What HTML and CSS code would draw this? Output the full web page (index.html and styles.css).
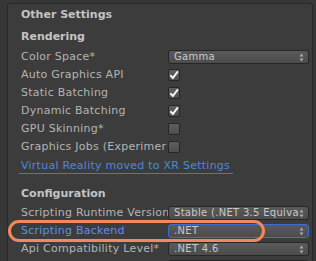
FILE: index.html
```html
<!DOCTYPE html>
<html lang="en">
<head>
    <meta charset="UTF-8">
    <title>Player Settings</title>
    <link rel="stylesheet" href="styles.css">
</head>
<body>
    <!-- inspector panel -->
    <div class="inspector">
        <div class="panel">
            <div class="section-title">Other Settings</div>

            <div class="group-title">Rendering</div>
            <div class="row">
                <span class="label">Color Space*</span>
                <div class="popup"><span class="popup-text">Gamma</span><svg class="arrows" viewBox="0 0 5 9"><path d="M2.5 0.5 L4.5 3.5 L0.5 3.5 Z M2.5 8.5 L4.5 5.5 L0.5 5.5 Z"/></svg></div>
            </div>
            <div class="row">
                <span class="label">Auto Graphics API</span>
                <span class="toggle on"><svg viewBox="0 0 12 12"><path d="M2.3 6.2 L4.9 8.9 L9.9 2.4"/></svg></span>
            </div>
            <div class="row">
                <span class="label">Static Batching</span>
                <span class="toggle on"><svg viewBox="0 0 12 12"><path d="M2.3 6.2 L4.9 8.9 L9.9 2.4"/></svg></span>
            </div>
            <div class="row">
                <span class="label">Dynamic Batching</span>
                <span class="toggle on"><svg viewBox="0 0 12 12"><path d="M2.3 6.2 L4.9 8.9 L9.9 2.4"/></svg></span>
            </div>
            <div class="row">
                <span class="label">GPU Skinning*</span>
                <span class="toggle"></span>
            </div>
            <div class="row">
                <span class="label">Graphics Jobs (Experimer</span>
                <span class="toggle"></span>
            </div>
            <div class="row">
                <span class="link">Virtual Reality moved to XR Settings</span>
            </div>

            <div class="group-title config">Configuration</div>
            <div class="row first">
                <span class="label">Scripting Runtime Version</span>
                <div class="popup"><span class="popup-text">Stable (.NET 3.5 Equivale</span><svg class="arrows" viewBox="0 0 5 9"><path d="M2.5 0.5 L4.5 3.5 L0.5 3.5 Z M2.5 8.5 L4.5 5.5 L0.5 5.5 Z"/></svg></div>
            </div>
            <div class="row">
                <span class="label focused">Scripting Backend</span>
                <div class="popup focused"><span class="popup-text">.NET</span><svg class="arrows" viewBox="0 0 5 9"><path d="M2.5 0.5 L4.5 3.5 L0.5 3.5 Z M2.5 8.5 L4.5 5.5 L0.5 5.5 Z"/></svg></div>
            </div>
            <div class="row">
                <span class="label">Api Compatibility Level*</span>
                <div class="popup"><span class="popup-text">.NET 4.6</span><svg class="arrows" viewBox="0 0 5 9"><path d="M2.5 0.5 L4.5 3.5 L0.5 3.5 Z M2.5 8.5 L4.5 5.5 L0.5 5.5 Z"/></svg></div>
            </div>
            <div class="row">
                <span class="label"></span>
                <div class="popup"></div>
            </div>
        </div>
        <div class="scroll"></div>
    </div>

    <!-- annotation drawn over the screenshot -->
    <div class="highlight"></div>
</body>
</html>
```

FILE: styles.css
```css
body{
    margin: 0;
    width: 316px;
    height: 261px;
    overflow: hidden;
    background-color: #373737;
    font-family: "DejaVu Sans", "Liberation Sans", sans-serif;
    font-size: 11px;
    position: relative;
}

.inspector{
    display: flex;
    height: 100%;
    padding: 3px 0 0 7px;
    box-sizing: border-box;
    overflow: hidden;
}

.panel{
    flex: 1;
    min-width: 0;
    background-color: #3c3c3c;
    border: 1px solid #292929;
    border-bottom: none;
    border-radius: 3px 3px 0 0;
    padding: 2px 2px 0 13px;
    overflow: hidden;
}

.scroll{
    width: 3px;
    background-color: #353535;
}

.section-title,
.group-title{
    height: 18px;
    line-height: 18px;
    font-weight: bold;
    color: #c4c4c4;
}

.group-title{
    margin-top: 4px;
    margin-bottom: 2px;
}

.group-title.config{
    margin-top: 11px;
    margin-bottom: 0;
}

.row{
    display: flex;
    align-items: center;
    height: 18px;
}

.row.first{
    margin-top: 1px;
}

.label{
    width: 147px;
    flex-shrink: 0;
    line-height: 18px;
    color: #b4b4b4;
    letter-spacing: 0.25px;
    white-space: nowrap;
    overflow: hidden;
}

.label.focused{
    color: #5d91e6;
}

.link{
    color: #4d88de;
    letter-spacing: 0.25px;
    line-height: 15px;
    white-space: nowrap;
    margin-left: -2px;
    padding: 0 3px 0 2px;
    border-bottom: 1px solid #3f78d4;
    margin-top: 1px;
}

/* checkbox */
.toggle{
    width: 12px;
    height: 12px;
    box-sizing: border-box;
    border: 1px solid #262626;
    border-radius: 2px;
    background: linear-gradient(#5e5e5e, #4d4d4d);
}

.toggle svg{
    display: block;
    width: 12px;
    height: 12px;
    margin: -1px 0 0 -1px;
}

.toggle path{
    fill: none;
    stroke: #f2f2f2;
    stroke-width: 2;
}

/* dropdown */
.popup{
    width: 141px;
    flex: none;
    height: 14px;
    box-sizing: border-box;
    border: 1px solid #262626;
    border-radius: 3px;
    background: linear-gradient(#5a5a5a, #4c4c4c);
    display: flex;
    align-items: center;
    padding: 0 4px 0 5px;
    overflow: hidden;
}

.popup.focused{
    border-color: #3d6fd2;
}

.popup-text{
    flex: 1;
    min-width: 0;
    font-size: 10px;
    line-height: 12px;
    color: #c8c8c8;
    letter-spacing: 0.3px;
    white-space: nowrap;
    overflow: hidden;
}

.arrows{
    width: 5px;
    height: 9px;
    flex-shrink: 0;
}

.arrows path{
    fill: #aaaaaa;
}

.highlight{
    position: absolute;
    left: 8px;
    top: 220px;
    width: 257px;
    height: 22px;
    box-sizing: border-box;
    border: 3px solid #f08a5e;
    border-radius: 12px;
    box-shadow: 0 0 1px #6a4030;
}
```
